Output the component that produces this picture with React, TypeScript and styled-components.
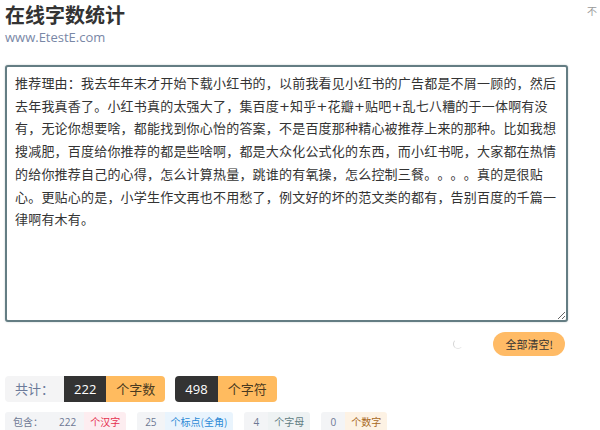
import styled, { createGlobalStyle } from "styled-components";

const GlobalStyle = createGlobalStyle`
    html, body {
        margin: 0;
        padding: 0;
        background: #ffffff;
        overflow: hidden;
    }
    body {
        font-family: "Noto Sans CJK SC", "Liberation Sans", sans-serif;
        color: #333333;
    }
`;

const Page = styled.div`
    position: relative;
    width: 600px;
    height: 430px;
    padding: 0 5px;
    box-sizing: border-box;
    overflow: hidden;
`;

const Header = styled.div`
    display: flex;
    flex-direction: column;
    padding-top: 2px;
    height: 65px;
    box-sizing: border-box;
`;

const Title = styled.h1`
    margin: 0;
    font-size: 20px;
    line-height: 26px;
    font-weight: bold;
    color: #333333;
`;

const Site = styled.div`
    font-family: "Open Sans", "Liberation Sans", sans-serif;
    font-size: 13px;
    line-height: 18px;
    color: #7987a6;
`;

const CornerHint = styled.span`
    position: absolute;
    left: 587px;
    top: 3px;
    font-size: 10px;
    color: #999999;
`;

const Editor = styled.textarea`
    display: block;
    width: 563px;
    height: 257px;
    box-sizing: border-box;
    margin: 0;
    padding: 6px 8px;
    border: 2px solid #647d83;
    border-radius: 3px;
    font-family: "DejaVu Sans", "Noto Sans CJK SC", sans-serif;
    font-size: 13px;
    line-height: 22.7px;
    letter-spacing: 0.2px;
    text-spacing-trim: space-all;
    color: #333333;
    resize: both;
    outline: none;
    box-shadow: 0 0 2px rgba(100, 125, 131, 0.4);
`;

const ActionRow = styled.div`
    display: flex;
    justify-content: flex-end;
    align-items: center;
    gap: 30px;
    width: 563px;
    padding-top: 10px;
    padding-right: 3px;
    box-sizing: border-box;
`;

const Spinner = styled.div`
    width: 8px;
    height: 8px;
    border-radius: 50%;
    border: 1.5px solid transparent;
    border-left-color: #d4d4d4;
    border-bottom-color: #e4e4e4;
`;

const ClearButton = styled.button`
    height: 24px;
    padding: 0 12px;
    border: none;
    border-radius: 12px;
    background: #ffbb66;
    color: #333333;
    font-family: "Noto Sans CJK SC", sans-serif;
    font-size: 11px;
    cursor: pointer;
`;

const TotalRow = styled.div`
    display: flex;
    align-items: center;
    gap: 10px;
    margin-top: 20px;
`;

const Group = styled.div`
    display: flex;
    border-radius: 4px;
    overflow: hidden;
    height: 26px;
    font-size: 13px;
    line-height: 26px;
`;

const Label = styled.span`
    background: #f4f4f5;
    color: #6c7a9a;
    padding: 0 10px;
`;

const Count = styled.span`
    background: #333333;
    color: #ffffff;
    padding: 0 10px;
    font-family: "Open Sans", "Liberation Sans", sans-serif;
`;

const Unit = styled.span`
    background: #ffbb5f;
    color: #4a3a20;
    padding: 0 10px;
`;

const DetailRow = styled.div`
    display: flex;
    gap: 11px;
    margin-top: 10px;
`;

const Chip = styled.div`
    display: flex;
    border-radius: 3px;
    overflow: hidden;
    height: 22px;
    font-size: 10px;
    line-height: 20px;
`;

const ChipNum = styled.span`
    background: #f3f4f6;
    color: #6d7894;
    padding: 0 8px;
    min-width: 8px;
    text-align: center;
    font-family: "Open Sans", "Liberation Sans", sans-serif;
`;

const ChipLead = styled.span`
    background: #f3f4f6;
    color: #6d7894;
    padding: 0 8px;
`;

const ChipLabel = styled.span<{ $tone: string; $bg: string }>`
    background: ${(p) => p.$bg};
    color: ${(p) => p.$tone};
    padding: 0 6px;
`;

const sample =
    "推荐理由：我去年年末才开始下载小红书的，以前我看见小红书的广告都是不屑一顾的，然后去年我真香了。小红书真的太强大了，集百度+知乎+花瓣+贴吧+乱七八糟的于一体啊有没有，无论你想要啥，都能找到你心怡的答案，不是百度那种精心被推荐上来的那种。比如我想搜减肥，百度给你推荐的都是些啥啊，都是大众化公式化的东西，而小红书呢，大家都在热情的给你推荐自己的心得，怎么计算热量，跳谁的有氧操，怎么控制三餐。。。。真的是很贴心。更贴心的是，小学生作文再也不用愁了，例文好的坏的范文类的都有，告别百度的千篇一律啊有木有。";

const details = [
    { num: "222", label: "个汉字", tone: "#e5304e", bg: "#fdedf0" },
    { num: "25", label: "个标点(全角)", tone: "#2d8ad6", bg: "#e9f4fd" },
    { num: "4", label: "个字母", tone: "#5f7c82", bg: "#eef2f3" },
    { num: "0", label: "个数字", tone: "#a8681c", bg: "#fdf2e4" },
];

export default function App() {
    return (
        <Page>
            <GlobalStyle />
            <CornerHint>不</CornerHint>
            <Header>
                <Title>在线字数统计</Title>
                <Site>www.EtestE.com</Site>
            </Header>
            <Editor defaultValue={sample} />
            <ActionRow>
                <Spinner />
                <ClearButton>全部清空!</ClearButton>
            </ActionRow>
            <TotalRow>
                <Group>
                    <Label>共计：</Label>
                    <Count>222</Count>
                    <Unit>个字数</Unit>
                </Group>
                <Group>
                    <Count>498</Count>
                    <Unit>个字符</Unit>
                </Group>
            </TotalRow>
            <DetailRow>
                {details.map((d, i) => (
                    <Chip key={d.label}>
                        {i === 0 && <ChipLead>包含：</ChipLead>}
                        <ChipNum>{d.num}</ChipNum>
                        <ChipLabel $tone={d.tone} $bg={d.bg}>
                            {d.label}
                        </ChipLabel>
                    </Chip>
                ))}
            </DetailRow>
        </Page>
    );
}
